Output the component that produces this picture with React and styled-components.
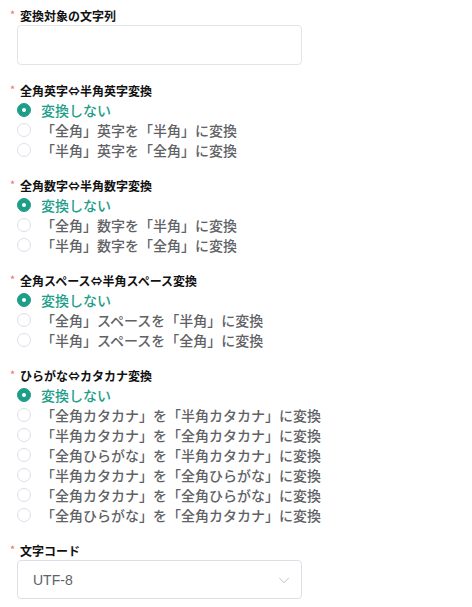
import React, { useState } from "react";
import styled, { createGlobalStyle } from "styled-components";

const GlobalStyle = createGlobalStyle`
  body {
    margin: 0;
    background: #ffffff;
    font-family: "Noto Sans CJK JP", "Noto Sans", sans-serif;
  }
`;

const Form = styled.div`
  padding: 5px 0 0 10px;
  width: 292px;
`;

const Section = styled.div`
  margin-bottom: 15px;
`;

const Label = styled.div`
  display: flex;
  align-items: center;
  height: 20px;
  font-size: 12px;
  font-weight: 700;
  color: #111;
`;

const Star = styled.span`
  color: #f56c6c;
  font-size: 11px;
  font-weight: 400;
  width: 10px;
  margin-top: -3px;
`;

const Field = styled.div`
  margin-left: 7px;
`;

const TextArea = styled.textarea`
  display: block;
  box-sizing: border-box;
  width: 285px;
  height: 40px;
  border: 1px solid #e2e4ea;
  border-radius: 4px;
  resize: none;
  outline: none;
`;

const Row = styled.label`
  display: flex;
  align-items: center;
  height: 20px;
  cursor: pointer;
`;

const Circle = styled.span`
  box-sizing: border-box;
  width: 14px;
  height: 14px;
  border-radius: 50%;
  border: 1px solid ${p => (p.$on ? "#1e9e89" : "#dcdfe6")};
  background: ${p => (p.$on ? "#1e9e89" : "#fff")};
  display: flex;
  align-items: center;
  justify-content: center;
  margin-right: 10px;
  flex-shrink: 0;

  &::after {
    content: "";
    width: 4px;
    height: 4px;
    border-radius: 50%;
    background: #fff;
    display: ${p => (p.$on ? "block" : "none")};
  }
`;

const OptionText = styled.span`
  font-size: 14px;
  font-weight: 500;
  color: ${p => (p.$on ? "#1e9e89" : "#606266")};
  white-space: nowrap;
`;

const Select = styled.div`
  box-sizing: border-box;
  width: 285px;
  height: 39px;
  border: 1px solid #dcdfe6;
  border-radius: 4px;
  display: flex;
  align-items: center;
  justify-content: space-between;
  padding: 0 9px 0 15px;
  font-family: "Liberation Sans", Arial, sans-serif;
  font-size: 14px;
  color: #606266;
`;

const groups = [
  {
    label: "全角英字⇔半角英字変換",
    options: ["変換しない", "「全角」英字を「半角」に変換", "「半角」英字を「全角」に変換"],
  },
  {
    label: "全角数字⇔半角数字変換",
    options: ["変換しない", "「全角」数字を「半角」に変換", "「半角」数字を「全角」に変換"],
  },
  {
    label: "全角スペース⇔半角スペース変換",
    options: ["変換しない", "「全角」スペースを「半角」に変換", "「半角」スペースを「全角」に変換"],
  },
  {
    label: "ひらがな⇔カタカナ変換",
    options: [
      "変換しない",
      "「全角カタカナ」を「半角カタカナ」に変換",
      "「半角カタカナ」を「全角カタカナ」に変換",
      "「全角ひらがな」を「半角カタカナ」に変換",
      "「半角カタカナ」を「全角ひらがな」に変換",
      "「全角カタカナ」を「全角ひらがな」に変換",
      "「全角ひらがな」を「全角カタカナ」に変換",
    ],
  },
];

const RadioGroup = ({ label, options }) => {
  const [value, setValue] = useState(0);
  return (
    <Section>
      <Label>
        <Star>*</Star>
        {label}
      </Label>
      <Field>
        {options.map((opt, i) => (
          <Row key={i} onClick={() => setValue(i)}>
            <Circle $on={value === i} />
            <OptionText $on={value === i}>{opt}</OptionText>
          </Row>
        ))}
      </Field>
    </Section>
  );
};

const App = () => (
  <>
    <GlobalStyle />
    <Form>
      <Section>
        <Label>
          <Star>*</Star>
          変換対象の文字列
        </Label>
        <Field>
          <TextArea />
        </Field>
      </Section>
      {groups.map(g => (
        <RadioGroup key={g.label} label={g.label} options={g.options} />
      ))}
      <Section>
        <Label>
          <Star>*</Star>
          文字コード
        </Label>
        <Field>
          <Select>
            UTF-8
            <svg width="16" height="16" viewBox="0 0 24 24" fill="none" stroke="#b4b8c0" strokeWidth="1.4">
              <path d="M5 9l7 7 7-7" />
            </svg>
          </Select>
        </Field>
      </Section>
    </Form>
  </>
);

export default App;
